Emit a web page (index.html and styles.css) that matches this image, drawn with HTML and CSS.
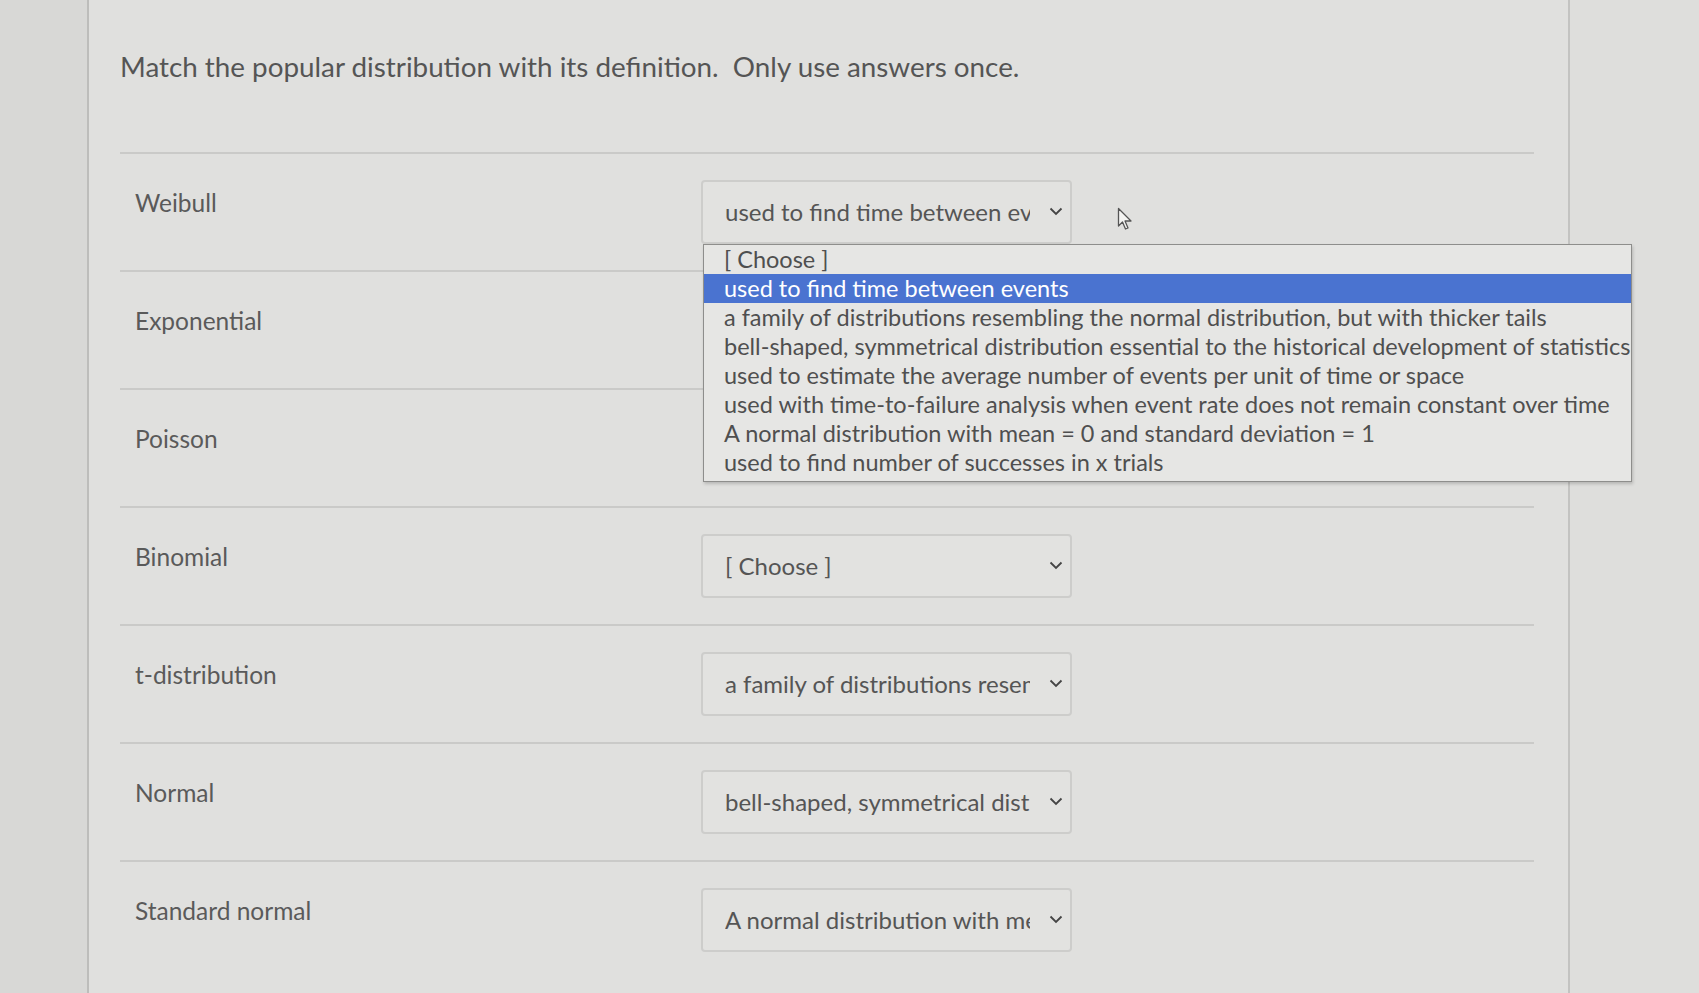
FILE: index.html
```html
<!DOCTYPE html>
<html lang="en">
<head>
<meta charset="utf-8">
<title>Match distributions</title>
<link rel="stylesheet" href="styles.css">
</head>
<body>
<div class="page">
  <div class="gutter"></div>
  <main class="panel">
    <h1 class="question">Match the popular distribution with its definition.&nbsp; Only use answers once.</h1>
    <div class="rows">
      <div class="row">
        <div class="label">Weibull</div>
        <div class="select-wrap">
          <div class="select"><span class="value">used to find time between events</span><svg class="chev" viewBox="0 0 14 9" width="14" height="9"><path d="M1.5 1.5 L7 7 L12.5 1.5" fill="none" stroke="#444" stroke-width="1.8"/></svg></div>
          <ul class="dropdown">
            <li>[ Choose ]</li>
            <li class="active">used to find time between events</li>
            <li>a family of distributions resembling the normal distribution, but with thicker tails</li>
            <li>bell-shaped, symmetrical distribution essential to the historical development of statistics</li>
            <li>used to estimate the average number of events per unit of time or space</li>
            <li>used with time-to-failure analysis when event rate does not remain constant over time</li>
            <li>A normal distribution with mean = 0 and standard deviation = 1</li>
            <li>used to find number of successes in x trials</li>
          </ul>
        </div>
      </div>
      <div class="row">
        <div class="label">Exponential</div>
      </div>
      <div class="row">
        <div class="label">Poisson</div>
      </div>
      <div class="row">
        <div class="label">Binomial</div>
        <div class="select-wrap">
          <div class="select"><span class="value">[ Choose ]</span><svg class="chev" viewBox="0 0 14 9" width="14" height="9"><path d="M1.5 1.5 L7 7 L12.5 1.5" fill="none" stroke="#444" stroke-width="1.8"/></svg></div>
        </div>
      </div>
      <div class="row">
        <div class="label">t-distribution</div>
        <div class="select-wrap">
          <div class="select"><span class="value">a family of distributions resembling the normal distribution, but with thicker tails</span><svg class="chev" viewBox="0 0 14 9" width="14" height="9"><path d="M1.5 1.5 L7 7 L12.5 1.5" fill="none" stroke="#444" stroke-width="1.8"/></svg></div>
        </div>
      </div>
      <div class="row">
        <div class="label">Normal</div>
        <div class="select-wrap">
          <div class="select"><span class="value">bell-shaped, symmetrical distribution essential to the historical development of statistics</span><svg class="chev" viewBox="0 0 14 9" width="14" height="9"><path d="M1.5 1.5 L7 7 L12.5 1.5" fill="none" stroke="#444" stroke-width="1.8"/></svg></div>
        </div>
      </div>
      <div class="row last">
        <div class="label">Standard normal</div>
        <div class="select-wrap">
          <div class="select"><span class="value">A normal distribution with mean = 0 and standard deviation = 1</span><svg class="chev" viewBox="0 0 14 9" width="14" height="9"><path d="M1.5 1.5 L7 7 L12.5 1.5" fill="none" stroke="#444" stroke-width="1.8"/></svg></div>
        </div>
      </div>
    </div>
  </main>
  <div class="outside"></div>
  <svg class="cursor" width="18" height="24" viewBox="0 0 18 24"><path d="M1.5 1.5 L1.5 19 L5.5 15 L8.5 22 L11 21 L8 14 L14 14 Z" fill="#f4f4f2" stroke="#555" stroke-width="1.3" stroke-linejoin="round"/></svg>
</div>
</body>
</html>
```

FILE: styles.css
```css
* { box-sizing: border-box; }
html, body {
  margin: 0;
  padding: 0;
  height: 100%;
  background: #dcdcda;
  font-family: Lato, "Open Sans", "Liberation Sans", sans-serif;
  color: #575757;
  overflow: hidden;
}
.page {
  display: flex;
  height: 993px;
  position: relative;
}
.gutter {
  width: 89px;
  flex: none;
  background: #d8d8d6;
  border-right: 2px solid #bdbdbb;
}
.panel {
  width: 1481px;
  flex: none;
  background: #e0e0de;
  border-right: 2px solid #c3c3c1;
  padding: 0 34px 0 31px;
}
.outside {
  flex: 1;
  background: #dededc;
}
.question {
  margin: 0;
  padding-top: 50px;
  height: 154px;
  font-size: 27.8px;
  font-weight: 400;
  color: #555;
  border-bottom: 2px solid #cacac8;
}
.rows {
  display: flex;
  flex-direction: column;
}
.row {
  display: flex;
  height: 118px;
  border-bottom: 2px solid #cacac8;
  padding-left: 10px;
}
.row.last { border-bottom: none; }
.label {
  width: 571px;
  flex: none;
  padding: 34px 0 0 5px;
  font-size: 24.5px;
  color: #5a5a5a;
}
.select-wrap {
  position: relative;
  padding-top: 26px;
}
.select {
  width: 371px;
  height: 64px;
  border: 2px solid #cdcdcb;
  border-radius: 4px;
  background: #e2e2e0;
  display: flex;
  align-items: center;
  padding: 0 7px 2px 22px;
  font-size: 24px;
  color: #555;
}
.value {
  width: 305px;
  overflow: hidden;
  white-space: nowrap;
  flex: none;
}
.chev {
  margin-left: auto;
  flex: none;
}
.dropdown {
  position: absolute;
  left: 2px;
  top: 90px;
  width: 929px;
  margin: 0;
  padding: 0 0 4px 0;
  list-style: none;
  background: #e6e6e4;
  border: 1.5px solid #8e8e8c;
  box-shadow: 1px 2px 3px rgba(0,0,0,0.18);
  z-index: 5;
}
.dropdown li {
  height: 29px;
  line-height: 29px;
  padding-left: 20px;
  font-size: 23.5px;
  color: #4f4f4f;
  white-space: nowrap;
}
.dropdown li.active {
  background: #4a73d0;
  color: #fff;
}
.cursor {
  position: absolute;
  left: 1117px;
  top: 207px;
}
```
